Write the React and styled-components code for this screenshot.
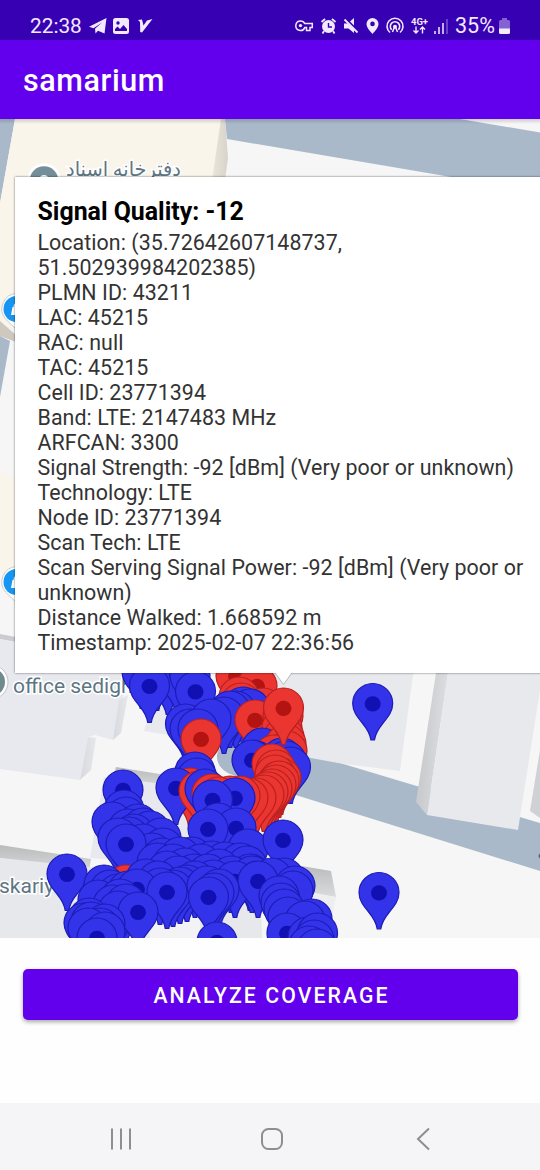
import React from "react";
import styled, { createGlobalStyle } from "styled-components";

const GlobalStyle = createGlobalStyle`
  body { margin: 0; background: #fff; font-family: Roboto, "Noto Sans", sans-serif; }
  * { box-sizing: border-box; }
`;

const Screen = styled.div`
  display: flex;
  flex-direction: column;
  width: 540px;
  height: 1170px;
  overflow: hidden;
  background: #fefefe;
`;

const StatusBar = styled.header`
  display: flex;
  justify-content: space-between;
  align-items: flex-start;
  height: 40px;
  padding: 14px 30px 0 30px;
  background: #3700b3;
  color: #f3e9ff;
`;

const StatusGroup = styled.div`
  display: flex;
  align-items: center;
  height: 24px;
`;

const StatusText = styled.span`
  font-size: ${(p) => p.$size || 20.5}px;
  line-height: 24px;
  width: ${(p) => p.$width}px;
  margin-left: ${(p) => p.$gap || 0}px;
  white-space: nowrap;
`;

const StatusIcon = styled.svg`
  display: block;
  flex: none;
  margin-left: ${(p) => p.$gap}px;
  overflow: visible;
`;

const AppBar = styled.div`
  display: flex;
  align-items: center;
  height: 79px;
  padding: 3px 22px 0 23px;
  background: #6200ee;
  color: #fff;
`;

const AppTitle = styled.h1`
  margin: 0;
  font-size: 30.5px;
  line-height: 36px;
  font-weight: 500;
  letter-spacing: 0.6px;
`;

const MapArea = styled.main`
  position: relative;
  height: 819px;
  overflow: hidden;
  background: #f6f6f6;
`;

const MapCanvas = styled.svg`
  display: block;
  width: 540px;
  height: 819px;
`;

const MapShade = styled.div`
  position: absolute;
  inset: 0 0 auto 0;
  height: 5px;
  background: linear-gradient(rgba(0, 0, 0, 0.16), transparent);
`;

const InfoWindow = styled.section`
  position: absolute;
  left: 15px;
  top: 58px;
  width: 535px;
  height: 496px;
  padding: 21px 10px 0 22.5px;
  background: #fff;
  box-shadow: 0 0 2px rgba(0, 0, 0, 0.6);
`;

const InfoTitle = styled.h2`
  margin: 0 0 5px;
  font-size: 24.9px;
  line-height: 27px;
  font-weight: 700;
  color: #000;
  white-space: nowrap;
`;

const InfoLine = styled.div`
  font-size: 21.4px;
  line-height: 25px;
  letter-spacing: 0.06px;
  color: #333;
  white-space: nowrap;
`;

const InfoArrow = styled.svg`
  position: absolute;
  left: 259px;
  top: 495px;
`;

const Footer = styled.div`
  height: 165px;
  padding: 31px 23px 0;
  background: #fefefe;
`;

const AnalyzeButton = styled.button`
  display: block;
  width: 495px;
  height: 51px;
  padding: 2px 0 0 2px;
  border: 0;
  border-radius: 5px;
  background: #6200ee;
  color: #fff;
  font: 500 21.2px/25px Roboto, sans-serif;
  letter-spacing: 2.1px;
  box-shadow: 0 2px 4px rgba(0, 0, 0, 0.35);
`;

const NavBar = styled.nav`
  display: flex;
  justify-content: space-between;
  align-items: center;
  height: 67px;
  padding: 4px 106px 0 109px;
  background: #f5f5f8;
`;

const NavIcon = styled.svg`
  display: block;
  fill: none;
  stroke: #8d8e90;
  stroke-width: 2;
`;

const PIN_PATH =
  "M0-20C11-20 20-11 20 0C20 8 15.5 13.5 10 20C5.5 25.5 2.6 31 1.8 36.3L-1.8 36.3C-2.6 31-5.5 25.5-10 20C-15.5 13.5-20 8-20 0C-20-11-11-20 0-20Z";

const B = "b";
const R = "r";

/* Readings whose centre dot is buried in a cluster are drawn without it. */
const PB = "plain-b";
const PR = "plain-r";

/* Head centres, in drawing order. */
const pins = [
  [142, 672, PB], [157, 674, PB], [168, 678, PB], [177, 675, B], [190, 676, PB],
  [236, 676, R], [257, 686, R], [149.5, 686, B], [195.5, 691.5, B],
  [239, 697, PR], [241, 703, PR], [263, 708, PR],
  [243, 707, PB], [250, 709, PB], [236, 711, PB], [230, 711, PB], [224, 717, PB],
  [185.5, 724, PB], [190, 729, PB], [211, 719, PB], [198, 729, PB],
  [255, 720, R], [283, 716, PR], [201, 739, R],
  [282, 728, PR], [284, 737, PR],
  [262, 748, PB], [286, 744, PR], [287, 751, PR], [274, 755, PR], [256, 761, PB], [252, 760, B],
  [282, 758, PB], [286, 761, PB], [290.5, 767, PB],
  [272, 764, PR], [276, 770, PR], [281, 778, PR], [275, 775, PR], [279, 781, PR], [276, 785, PR],
  [272, 789, PR],
  [195, 772, PB], [197, 778, PB], [190, 788, PR], [176, 788, B],
  [268, 792, PR], [264, 795, PR], [256, 798, PR], [248, 798, PR], [240, 796, PR], [230, 796, PR],
  [199, 791, PR], [205, 789, PB], [212, 794, PR], [218, 797, PR],
  [235, 798, B], [212.5, 800, B],
  [123, 790, B], [124, 810, PB], [126, 817, PB], [112, 822, PB],
  [218, 823, PB], [236, 828, B], [208, 829, B],
  [138, 824, PB], [128, 829, PB], [143, 828, PB], [150, 831, PB], [134, 834, PB],
  [129, 837, PB], [118, 838, PB], [161, 838, PB], [143, 844, PB], [163, 848, PB], [152, 853, PB], [126, 844, B],
  [248, 849, PB], [283, 840, B],
  [162, 858, PB], [192, 857, PB], [180, 857, PB], [212, 861, PB], [225, 862, PB],
  [157, 863, PB], [173, 864, PB], [201, 864, PB], [240, 863, PB], [247, 866, PB],
  [185, 868, PB], [219, 869, PB], [194, 874, PB], [167, 871, PB], [250, 874, PB],
  [208, 874, PB], [178, 876, PB], [231, 876, PB], [252, 876, PB],
  [284, 878, PB], [272, 878, PB],
  [126, 885, PR], [67, 874, B], [146, 879, PB], [158, 881, PB],
  [104, 885, PB], [110, 890, PB], [118, 894, PB], [128, 891, PB],
  [213, 880, PB], [195, 881, PB], [187, 885, PB], [180, 887, PB], [173, 890, PB], [160, 888, PB],
  [235, 881, B], [258, 881, B], [207, 886, PB], [219, 889, PB], [214, 893, PB],
  [137, 889, B], [167, 892, B], [208.5, 897, B],
  [98, 900, PB], [120, 899, PB], [113, 905, PB], [126, 904, PB], [118, 911, PB], [138, 912, B],
  [295, 886, B], [293, 891, PB], [279, 896, PB], [281, 903, PB], [284, 909, PB], [288, 917, PB],
  [312, 919, B], [305, 921, PB],
  [89, 918, PB], [84, 923, PB], [91, 922, PB], [105, 924, PB], [100, 928, PB], [88, 928, PB],
  [105, 932, PB], [97, 938, B], [217, 942, B],
  [287, 933, B], [308, 937, PB], [317.5, 933, PB], [314, 940, PB], [309, 946, PB], [317, 949, PB],
  [372.7, 703.5, B], [379, 892.5, B], [283.5, 708, R],
];

function Pin({ x, y, tone }) {
  const red = tone === R || tone === PR;
  const dotted = tone === B || tone === R;
  return (
    <g transform={`translate(${x} ${y})`}>
      <path d={PIN_PATH} fill={red ? "#ea3530" : "#3333ea"} stroke={red ? "#b9201f" : "#1c1cb4"} strokeWidth="1.200" />
      {dotted && <ellipse cx="0" cy="0.3" rx="8" ry="7.6" fill={red ? "#b31412" : "#1111b3"} />}
    </g>
  );
}

function ShopPin({ y }) {
  return (
    <g>
      <path d={`M17 ${y - 15.5}a15.500 15.500 0 0 0-11.500 25.500q5 5 11.500 11z`} fill="#fff" stroke="#c8cdd2" strokeWidth="1" />
      <circle cx="16.500" cy={y} r="13" fill="#1695f3" />
      <path d={`M11 ${y + 6}l1.500-8h1q0-4 3-4v12z`} fill="#fff" />
    </g>
  );
}

function MapDrawing() {
  return (
    <MapCanvas viewBox="0 119 540 819">
      <defs>
        <linearGradient id="wall" x1="0" x2="1" y1="0" y2="0.2">
          <stop offset="0" stopColor="#c3c4c6" />
          <stop offset="1" stopColor="#dddee1" />
        </linearGradient>
        <linearGradient id="softWall" x1="0" x2="1">
          <stop offset="0" stopColor="#d8d9de" />
          <stop offset="1" stopColor="#e6e7eb" />
        </linearGradient>
        <linearGradient id="wallDown" x1="0" x2="0" y1="0" y2="1">
          <stop offset="0" stopColor="#b9babb" />
          <stop offset="1" stopColor="#dadbdc" />
        </linearGradient>
        <linearGradient id="sandWall" x1="0" x2="1">
          <stop offset="0" stopColor="#ebe5db" />
          <stop offset="1" stopColor="#d8d3ca" />
        </linearGradient>
      </defs>
      <path d="M0 119H15L0 203Z" fill="#a9b9c9" />
      <path d="M15 119H222L212 180H16V330L0 325V203Z" fill="#f9f5eb" />
      <path d="M221 119L225 119L228 158L225 180H212Z" fill="url(#sandWall)" />
      <path d="M225 119H460L540 132.500V192L227 139Z" fill="#a9b9c9" />
      <path d="M0 321L16 335V342L0 336Z" fill="#cfc8be" />
      <path d="M0 336L10 341L0 397Z" fill="#a9b9c9" />
      <path d="M0 470L16 480V570L0 575Z" fill="#f9f5eb" />
      <path d="M0 634L16 637V642L0 639Z" fill="#cbccd0" />

      <path d="M0 639L130 668L113 740L95 735L88 737L80 780L0 769Z" fill="#e8e9ef" />
      <path d="M119 700L128 695L121 733L113 740Z" fill="url(#softWall)" />
      <path d="M88 737L96 738L91 770L80 780Z" fill="url(#softWall)" />
      <path d="M157 690L144 731L205 741L220 700Z" fill="#e8e9ef" />
      <path d="M217 755Q219 742 235 741L320 758L340 763L540 823V871L235 776Q216 770 217 755Z" fill="#a9b9c9" />
      <path d="M240 660H415L400 771L338 763L240 745Z" fill="#e8e9ed" />
      <path d="M436 673H448L427 815L416 802Z" fill="url(#wall)" />
      <path d="M448 673H540V690L518 830L427 815Z" fill="#e8e9ed" />
      <path d="M540 750L530 811L540 818Z" fill="#d0d1d4" />
      <circle cx="541" cy="856" r="2.500" fill="#58656e" />

      <path d="M116 767L172 776V790L113 779Z" fill="url(#wallDown)" />
      <path d="M104 777L215 790L260 870L90 858Z" fill="#e8e9ef" />
      <path d="M0 845L91 859L89 872L0 858Z" fill="url(#wallDown)" />
      <path d="M0 858L89 867L260 870L262 938H0Z" fill="#e6e8ec" />
      <path d="M146 905H200V938H150Z" fill="#f3f3f5" />
      <path d="M290 864L331 871L336 897L290 890Z" fill="url(#wallDown)" />
      <path d="M300 890L336 897L328 938H300Z" fill="#eeeef0" />

      <circle cx="44" cy="180.500" r="17" fill="#fff" />
      <circle cx="44" cy="180.500" r="14.300" fill="#758f9a" />
      <circle cx="44" cy="180" r="5" fill="#fff" />
      <ShopPin y={309} />
      <ShopPin y={582} />
      <circle cx="-9" cy="682" r="17" fill="#fff" stroke="#bec4c8" />
      <circle cx="-9" cy="682" r="14" fill="#708b90" />

      <g fill="#5d7683" stroke="#fff" strokeWidth="3" paintOrder="stroke" fontFamily='Roboto, "DejaVu Sans", sans-serif' fontSize="21">
        <text x="181" y="176" direction="rtl" textLength="115" lengthAdjust="spacingAndGlyphs" fontSize="20">دفترخانه اسناد</text>
        <text x="13" y="693">office sedigh</text>
        <text x="-1" y="893">skariy</text>
      </g>

      {pins.map(([x, y, tone], i) => (
        <Pin key={i} x={x} y={y} tone={tone} />
      ))}
    </MapCanvas>
  );
}

const details = [
  "Location: (35.72642607148737,",
  "51.502939984202385)",
  "PLMN ID: 43211",
  "LAC: 45215",
  "RAC: null",
  "TAC: 45215",
  "Cell ID: 23771394",
  "Band: LTE: 2147483 MHz",
  "ARFCAN: 3300",
  "Signal Strength: -92 [dBm] (Very poor or unknown)",
  "Technology: LTE",
  "Node ID: 23771394",
  "Scan Tech: LTE",
  "Scan Serving Signal Power: -92 [dBm] (Very poor or",
  "unknown)",
  "Distance Walked: 1.668592 m",
  "Timestamp: 2025-02-07 22:36:56",
];

function Status() {
  return (
    <StatusBar>
      <StatusGroup>
        <StatusText $width={52} $size={20.8}>22:38</StatusText>
        <StatusIcon $gap={7} width="18" height="16" viewBox="0 0 18 16">
          <path d="M0 8.800L17.500 0L15.500 15.500L9 12.700L6.500 15.500L6 10.800L13 4.600L4.500 10.200Z" fill="currentColor" />
        </StatusIcon>
        <StatusIcon $gap={6} width="16" height="16" viewBox="0 0 16 16">
          <path fillRule="evenodd" d="M2.500 0H13.500Q16 0 16 2.500V13.500Q16 16 13.500 16H2.500Q0 16 0 13.500V2.500Q0 0 2.500 0ZM2 13H14V11L10.500 7L7 11L4.500 8.500L2 11ZM5 3.300A1.700 1.700 0 1 0 5 6.700A1.700 1.700 0 1 0 5 3.300Z" fill="currentColor" />
        </StatusIcon>
        <StatusIcon $gap={8.5} width="15" height="14" viewBox="0 0 15 14">
          <path d="M0 1L4 .5L5.500 6.500L9 1.500L14.500 0L4 13.500L2.200 13L2 3Z" fill="currentColor" />
        </StatusIcon>
      </StatusGroup>
      <StatusGroup>
        <StatusIcon $gap={0} width="18" height="12" viewBox="0 0 18 12">
          <path d="M5.500 1a4.700 4.700 0 1 0 4.300 6.600H11.500V10.500H15V7.600H17.300V3.600H9.800A4.700 4.700 0 0 0 5.500 1Z" fill="none" stroke="currentColor" strokeWidth="1.500" />
          <circle cx="5.500" cy="5.600" r="1.700" fill="currentColor" />
        </StatusIcon>
        <StatusIcon $gap={8} width="15" height="16" viewBox="0 0 15 16">
          <circle cx="7.500" cy="8.500" r="6.500" fill="currentColor" />
          <path d="M.5 4L4 1M14.500 4L11 1M3 13L1.500 15.500M12 13L13.500 15.500" stroke="currentColor" strokeWidth="1.800" />
          <path d="M7.500 5V9H11" fill="none" stroke="#3700b3" strokeWidth="1.400" />
        </StatusIcon>
        <StatusIcon $gap={7.5} width="16" height="16" viewBox="0 0 16 16">
          <path d="M1 5.500H4.500L11 11V15L5.500 10.500H1ZM7 3.500L11 0V7.500Z" fill="currentColor" />
          <path d="M1.500 1.500L14.500 14.500" stroke="currentColor" strokeWidth="1.800" />
        </StatusIcon>
        <StatusIcon $gap={7} width="13" height="16" viewBox="0 0 13 16">
          <path fillRule="evenodd" d="M6.500 0A6 6 0 0 1 12.500 6C12.500 9.500 9 13 6.500 16C4 13 .5 9.500 .5 6A6 6 0 0 1 6.500 0ZM6.500 3.600A2.300 2.300 0 1 0 6.500 8.200A2.300 2.300 0 1 0 6.500 3.600Z" fill="currentColor" />
        </StatusIcon>
        <StatusIcon $gap={7} width="18" height="16" viewBox="0 0 18 16">
          <path d="M4 14.500A8 8 0 1 1 14 14.500M5.700 11.800A4.700 4.700 0 1 1 12.300 11.800" fill="none" stroke="currentColor" strokeWidth="1.600" />
          <circle cx="9" cy="8.800" r="2" fill="currentColor" />
          <path d="M8.300 9.500L6.500 14M9.700 9.500L11.500 14" fill="none" stroke="currentColor" strokeWidth="1.500" />
        </StatusIcon>
        <StatusIcon $gap={7} width="17" height="16" viewBox="0 0 17 16">
          <text x="0" y="6.500" fontSize="9" fontWeight="700" textLength="17" lengthAdjust="spacingAndGlyphs" fill="currentColor">4G+</text>
          <path d="M5 8.500V15M2.500 12.500L5 15L7.500 12.500M11.500 15.500V9M9 11.500L11.500 9L14 11.500" fill="none" stroke="currentColor" strokeWidth="1.400" />
        </StatusIcon>
        <StatusIcon $gap={6} width="14" height="15" viewBox="0 0 14 15">
          <path d="M1 12V15M5 8V15M9 4V15" stroke="currentColor" strokeWidth="1.500" />
          <path d="M13 0V15" stroke="#7c55d0" strokeWidth="1.500" />
        </StatusIcon>
        <StatusText $width={44} $gap={7} $size={21.5}>35%</StatusText>
        <StatusIcon $gap={0} width="11" height="16" viewBox="0 0 11 16">
          <path d="M3 0H8V2H9.500Q11 2 11 3.500V11H0V3.500Q0 2 1.500 2H3Z" fill="#8462d4" />
          <path d="M0 10.500H11V14.500Q11 16 9.500 16H1.500Q0 16 0 14.500Z" fill="currentColor" />
        </StatusIcon>
      </StatusGroup>
    </StatusBar>
  );
}

export default function App() {
  return (
    <Screen>
      <GlobalStyle />
      <Status />
      <AppBar>
        <AppTitle>samarium</AppTitle>
      </AppBar>
      <MapArea>
        <MapDrawing />
        <MapShade />
        <InfoWindow>
          <InfoTitle>Signal Quality: -12</InfoTitle>
          {details.map((line) => (
            <InfoLine key={line}>{line}</InfoLine>
          ))}
          <InfoArrow width="20" height="14" viewBox="0 0 20 14">
            <path d="M1 0L9.500 12.500L18 0Z" fill="#fff" />
            <path d="M1 .8L9.500 12.500L18 .8" fill="none" stroke="#a9a9a9" strokeWidth=".8" />
          </InfoArrow>
        </InfoWindow>
      </MapArea>
      <Footer>
        <AnalyzeButton>ANALYZE COVERAGE</AnalyzeButton>
      </Footer>
      <NavBar>
        <NavIcon width="24" height="24" viewBox="0 0 24 24">
          <path d="M3 1.500V22.500M12 1.500V22.500M21 1.500V22.500" />
        </NavIcon>
        <NavIcon width="24" height="24" viewBox="0 0 24 24">
          <rect x="2" y="2" width="20" height="20" rx="6.500" />
        </NavIcon>
        <NavIcon width="24" height="24" viewBox="0 0 24 24">
          <path d="M19 1.500L8 12L19 22.500" />
        </NavIcon>
      </NavBar>
    </Screen>
  );
}
